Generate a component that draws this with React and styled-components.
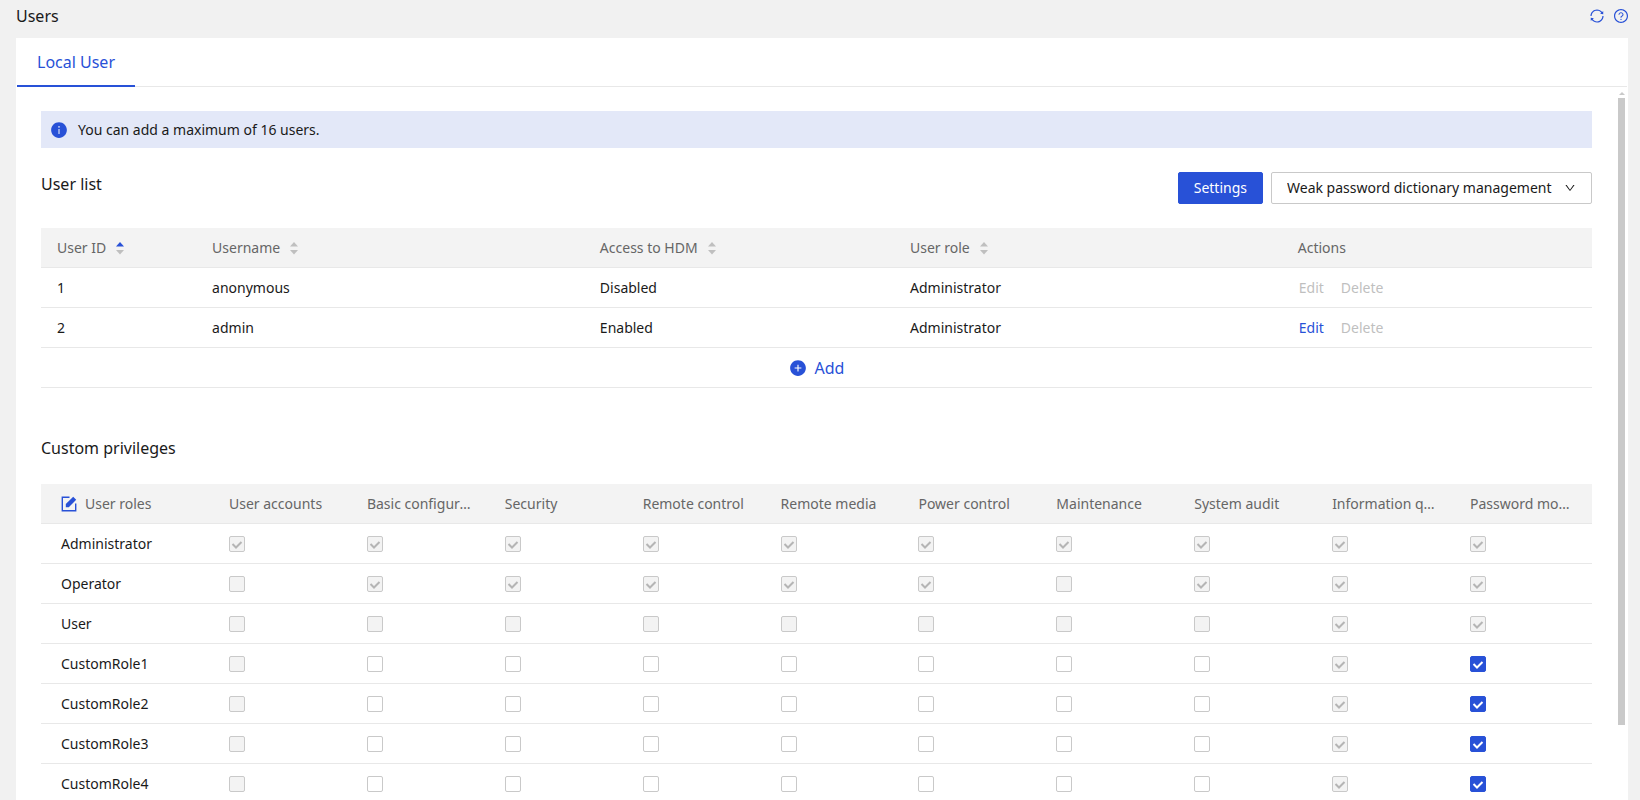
import React from 'react';
import styled, { createGlobalStyle } from 'styled-components';
import {
  AiOutlineSync,
  AiOutlineQuestionCircle,
  AiFillInfoCircle,
  AiFillPlusCircle,
  AiOutlineDown,
} from 'react-icons/ai';

const blue = '#2851d7';

const GlobalStyle = createGlobalStyle`
  * {
    box-sizing: border-box;
  }

  body {
    margin: 0;
    background-color: #f1f1f1;
    color: #1a1a1a;
    font-family: 'Noto Sans', 'Open Sans', sans-serif;
    font-size: 14px;
    line-height: 20px;
  }

  button,
  select,
  input {
    margin: 0;
    font: inherit;
  }

  h1,
  h2 {
    margin: 0;
    font-size: 16px;
    font-weight: 400;
    line-height: 24px;
  }
`;

const Page = styled.div`
  display: flex;
  flex-direction: column;
  height: 100vh;
  padding: 0 12px 0 16px;
  overflow: hidden;
`;

const Header = styled.header`
  display: flex;
  flex: none;
  justify-content: space-between;
  align-items: center;
  height: 38px;
  padding-bottom: 6px;
`;

const HeaderIcons = styled.div`
  display: flex;
  gap: 8px;
  margin-right: -1px;
`;

const IconButton = styled.button`
  display: flex;
  padding: 0;
  border: none;
  background: none;
  color: ${blue};
  font-size: 16px;
  cursor: pointer;
`;

const Panel = styled.main`
  display: flex;
  flex: 1;
  flex-direction: column;
  min-height: 0;
  padding: 0 1px;
  background-color: white;
`;

const Tabs = styled.nav`
  display: flex;
  flex: none;
  height: 49px;
  border-bottom: 1px solid #e8e8e8;
`;

const Tab = styled.a`
  height: 49px;
  padding: 12px 20px;
  border-bottom: 2px solid ${blue};
  color: ${blue};
  font-size: 16px;
  line-height: 24px;
  text-decoration: none;
`;

const Body = styled.div`
  display: flex;
  flex: 1;
  min-height: 0;
`;

const Content = styled.div`
  flex: 1;
  min-width: 0;
  padding: 24px 26px 0 24px;
  overflow: hidden;
`;

const Scrollbar = styled.div`
  display: flex;
  flex: none;
  flex-direction: column;
  align-items: center;
  width: 7px;
  margin-right: 2px;
  padding-top: 5px;
`;

const ScrollArrow = styled.div`
  border: 3px solid transparent;
  border-top: none;
  border-bottom-color: #c9c9c9;
`;

const ScrollThumb = styled.div`
  width: 100%;
  height: calc(89% - 3px);
  margin-top: 3px;
  background-color: #c9c9c9;
`;

const Notice = styled.div`
  display: flex;
  align-items: center;
  gap: 10px;
  height: 37px;
  padding: 0 9px;
  background-color: #e3e8f8;

  svg {
    color: ${blue};
    font-size: 18px;
  }
`;

const Toolbar = styled.div`
  display: flex;
  justify-content: space-between;
  align-items: flex-start;
  height: 56px;
  margin-top: 24px;
`;

const ToolbarActions = styled.div`
  display: flex;
  gap: 8px;
`;

const PrimaryButton = styled.button`
  height: 32px;
  padding: 0 15px;
  border: 1px solid ${blue};
  border-radius: 2px;
  background-color: ${blue};
  color: white;
  cursor: pointer;
`;

const SelectBox = styled.label`
  display: grid;
  align-items: center;

  > * {
    grid-area: 1 / 1;
  }

  svg {
    justify-self: end;
    margin-right: 16px;
    font-size: 12px;
    pointer-events: none;
  }
`;

const Select = styled.select`
  height: 32px;
  padding: 0 39px 0 15px;
  border: 1px solid #c9c9c9;
  border-radius: 2px;
  background-color: white;
  color: inherit;
  appearance: none;
`;

const Table = styled.table`
  width: 100%;
  border-collapse: separate;
  border-spacing: 0;
  table-layout: fixed;

  th,
  td {
    height: 40px;
    padding: 0 16px;
    overflow: hidden;
    border-bottom: 1px solid #e8e8e8;
    font-weight: 400;
    text-align: left;
    text-overflow: ellipsis;
    white-space: nowrap;
  }

  thead th {
    background-color: #f3f3f3;
    color: #666;
  }
`;

const RoleTable = styled(Table)`
  th:first-child {
    width: 172px;
    padding-left: 20px;
  }
`;

const HeadLabel = styled.span`
  display: flex;
  align-items: center;
  gap: ${(props) => props.$gap || 8}px;
`;

const SortButton = styled.button`
  display: flex;
  padding: 0;
  border: none;
  background: none;
`;

const LinkButton = styled.button`
  margin-right: 16px;
  padding: 0 0 0 1px;
  border: none;
  background: none;
  color: ${blue};
  cursor: pointer;

  &:disabled {
    color: #bfbfbf;
    cursor: default;
  }
`;

const AddRow = styled.div`
  display: flex;
  justify-content: center;
  height: 40px;
  border-bottom: 1px solid #e8e8e8;
`;

const AddButton = styled.button`
  display: flex;
  align-items: center;
  gap: 8px;
  border: none;
  background: none;
  color: ${blue};
  font-size: 16px;
  cursor: pointer;

  svg {
    font-size: 18px;
  }
`;

const SectionTitle = styled.h2`
  margin: 48px 0 24px;
`;

const CheckLabel = styled.label`
  display: grid;
  width: 16px;
  height: 16px;

  > * {
    grid-area: 1 / 1;
  }

  svg {
    pointer-events: none;
  }
`;

const CheckInput = styled.input`
  width: 16px;
  height: 16px;
  border: 1px solid #c9c9c9;
  border-radius: 2px;
  background-color: white;
  appearance: none;

  & + svg {
    visibility: hidden;
    color: white;
  }

  &:checked {
    border-color: ${blue};
    background-color: ${blue};
  }

  &:checked + svg {
    visibility: visible;
  }

  &:disabled {
    border-color: #c9c9c9;
    background-color: #f3f3f3;
  }

  &:disabled + svg {
    color: #b5b5b5;
  }
`;

const users = [
  { id: 1, name: 'anonymous', access: 'Disabled', role: 'Administrator', editable: false },
  { id: 2, name: 'admin', access: 'Enabled', role: 'Administrator', editable: true },
];

const userColumns = [
  { title: 'User ID', width: '10%', sort: 'asc' },
  { title: 'Username', width: '25%', sort: 'none' },
  { title: 'Access to HDM', width: '20%', sort: 'none' },
  { title: 'User role', width: '25%', sort: 'none' },
  { title: 'Actions', width: '20%' },
];

const privileges = [
  'User accounts',
  'Basic configuration',
  'Security',
  'Remote control',
  'Remote media',
  'Power control',
  'Maintenance',
  'System audit',
  'Information query',
  'Password modification',
];

// one digit per privilege: 1 = granted / locked
const roles = [
  { name: 'Administrator', granted: '1111111111', locked: '1111111111' },
  { name: 'Operator', granted: '0111110111', locked: '1111111111' },
  { name: 'User', granted: '0000000011', locked: '1111111111' },
  { name: 'CustomRole1', granted: '0000000011', locked: '1000000010' },
  { name: 'CustomRole2', granted: '0000000011', locked: '1000000010' },
  { name: 'CustomRole3', granted: '0000000011', locked: '1000000010' },
  { name: 'CustomRole4', granted: '0000000011', locked: '1000000010' },
];

function SortIcon({ order }) {
  return (
    <svg width="8" height="14" viewBox="0 0 8 14">
      <path d="M4 1 8 5.5H0Z" fill={order === 'asc' ? blue : '#bfbfbf'} />
      <path d="M4 13.5 0 9h8Z" fill="#bfbfbf" />
    </svg>
  );
}

function EditIcon() {
  return (
    <svg width="16" height="16" viewBox="0 0 16 16" fill="none">
      <path d="M8.500 1.300H1.300v13.400h13.400V7.500" stroke={blue} strokeWidth="1.4" />
      <path d="M4.800 11.200V8L12.200 .8 15.200 3.800 7.800 11.200Z" fill={blue} />
    </svg>
  );
}

function Checkbox({ label, checked, disabled }) {
  return (
    <CheckLabel>
      <CheckInput type="checkbox" aria-label={label} defaultChecked={checked} disabled={disabled} />
      <svg width="16" height="16" viewBox="0 0 16 16" fill="none">
        <path d="M3.500 8 7 11.500 12.500 6" stroke="currentColor" strokeWidth="2" />
      </svg>
    </CheckLabel>
  );
}

function UserTable() {
  return (
    <Table>
      <colgroup>
        {userColumns.map((column) => (
          <col key={column.title} width={column.width} />
        ))}
      </colgroup>
      <thead>
        <tr>
          {userColumns.map((column) => (
            <th key={column.title} scope="col">
              <HeadLabel $gap={10}>
                {column.title}
                {column.sort && (
                  <SortButton aria-label={`Sort by ${column.title}`}>
                    <SortIcon order={column.sort} />
                  </SortButton>
                )}
              </HeadLabel>
            </th>
          ))}
        </tr>
      </thead>
      <tbody>
        {users.map((user) => (
          <tr key={user.id}>
            <td>{user.id}</td>
            <td>{user.name}</td>
            <td>{user.access}</td>
            <td>{user.role}</td>
            <td>
              <LinkButton disabled={!user.editable}>Edit</LinkButton>
              <LinkButton disabled>Delete</LinkButton>
            </td>
          </tr>
        ))}
      </tbody>
    </Table>
  );
}

function PrivilegeTable() {
  return (
    <RoleTable>
      <thead>
        <tr>
          <th scope="col">
            <HeadLabel>
              <IconButton aria-label="Edit user roles">
                <EditIcon />
              </IconButton>
              User roles
            </HeadLabel>
          </th>
          {privileges.map((privilege) => (
            <th key={privilege} scope="col">{privilege}</th>
          ))}
        </tr>
      </thead>
      <tbody>
        {roles.map((role) => (
          <tr key={role.name}>
            <th scope="row">{role.name}</th>
            {privileges.map((privilege, i) => (
              <td key={privilege}>
                <Checkbox
                  label={`${role.name}: ${privilege}`}
                  checked={role.granted[i] === '1'}
                  disabled={role.locked[i] === '1'}
                />
              </td>
            ))}
          </tr>
        ))}
      </tbody>
    </RoleTable>
  );
}

function App() {
  return (
    <Page>
      <GlobalStyle />
      <Header>
        <h1>Users</h1>
        <HeaderIcons>
          <IconButton aria-label="Refresh">
            <AiOutlineSync />
          </IconButton>
          <IconButton aria-label="Help">
            <AiOutlineQuestionCircle />
          </IconButton>
        </HeaderIcons>
      </Header>
      <Panel>
        <Tabs>
          <Tab href="#local-user">Local User</Tab>
        </Tabs>
        <Body>
          <Content>
            <Notice>
              <AiFillInfoCircle />
              You can add a maximum of 16 users.
            </Notice>
            <Toolbar>
              <h2>User list</h2>
              <ToolbarActions>
                <PrimaryButton>Settings</PrimaryButton>
                <SelectBox>
                  <Select aria-label="Weak password dictionary management">
                    <option>Weak password dictionary management</option>
                  </Select>
                  <AiOutlineDown />
                </SelectBox>
              </ToolbarActions>
            </Toolbar>
            <UserTable />
            <AddRow>
              <AddButton>
                <AiFillPlusCircle />
                Add
              </AddButton>
            </AddRow>
            <SectionTitle>Custom privileges</SectionTitle>
            <PrivilegeTable />
          </Content>
          <Scrollbar>
            <ScrollArrow />
            <ScrollThumb />
          </Scrollbar>
        </Body>
      </Panel>
    </Page>
  );
}

export default App;
